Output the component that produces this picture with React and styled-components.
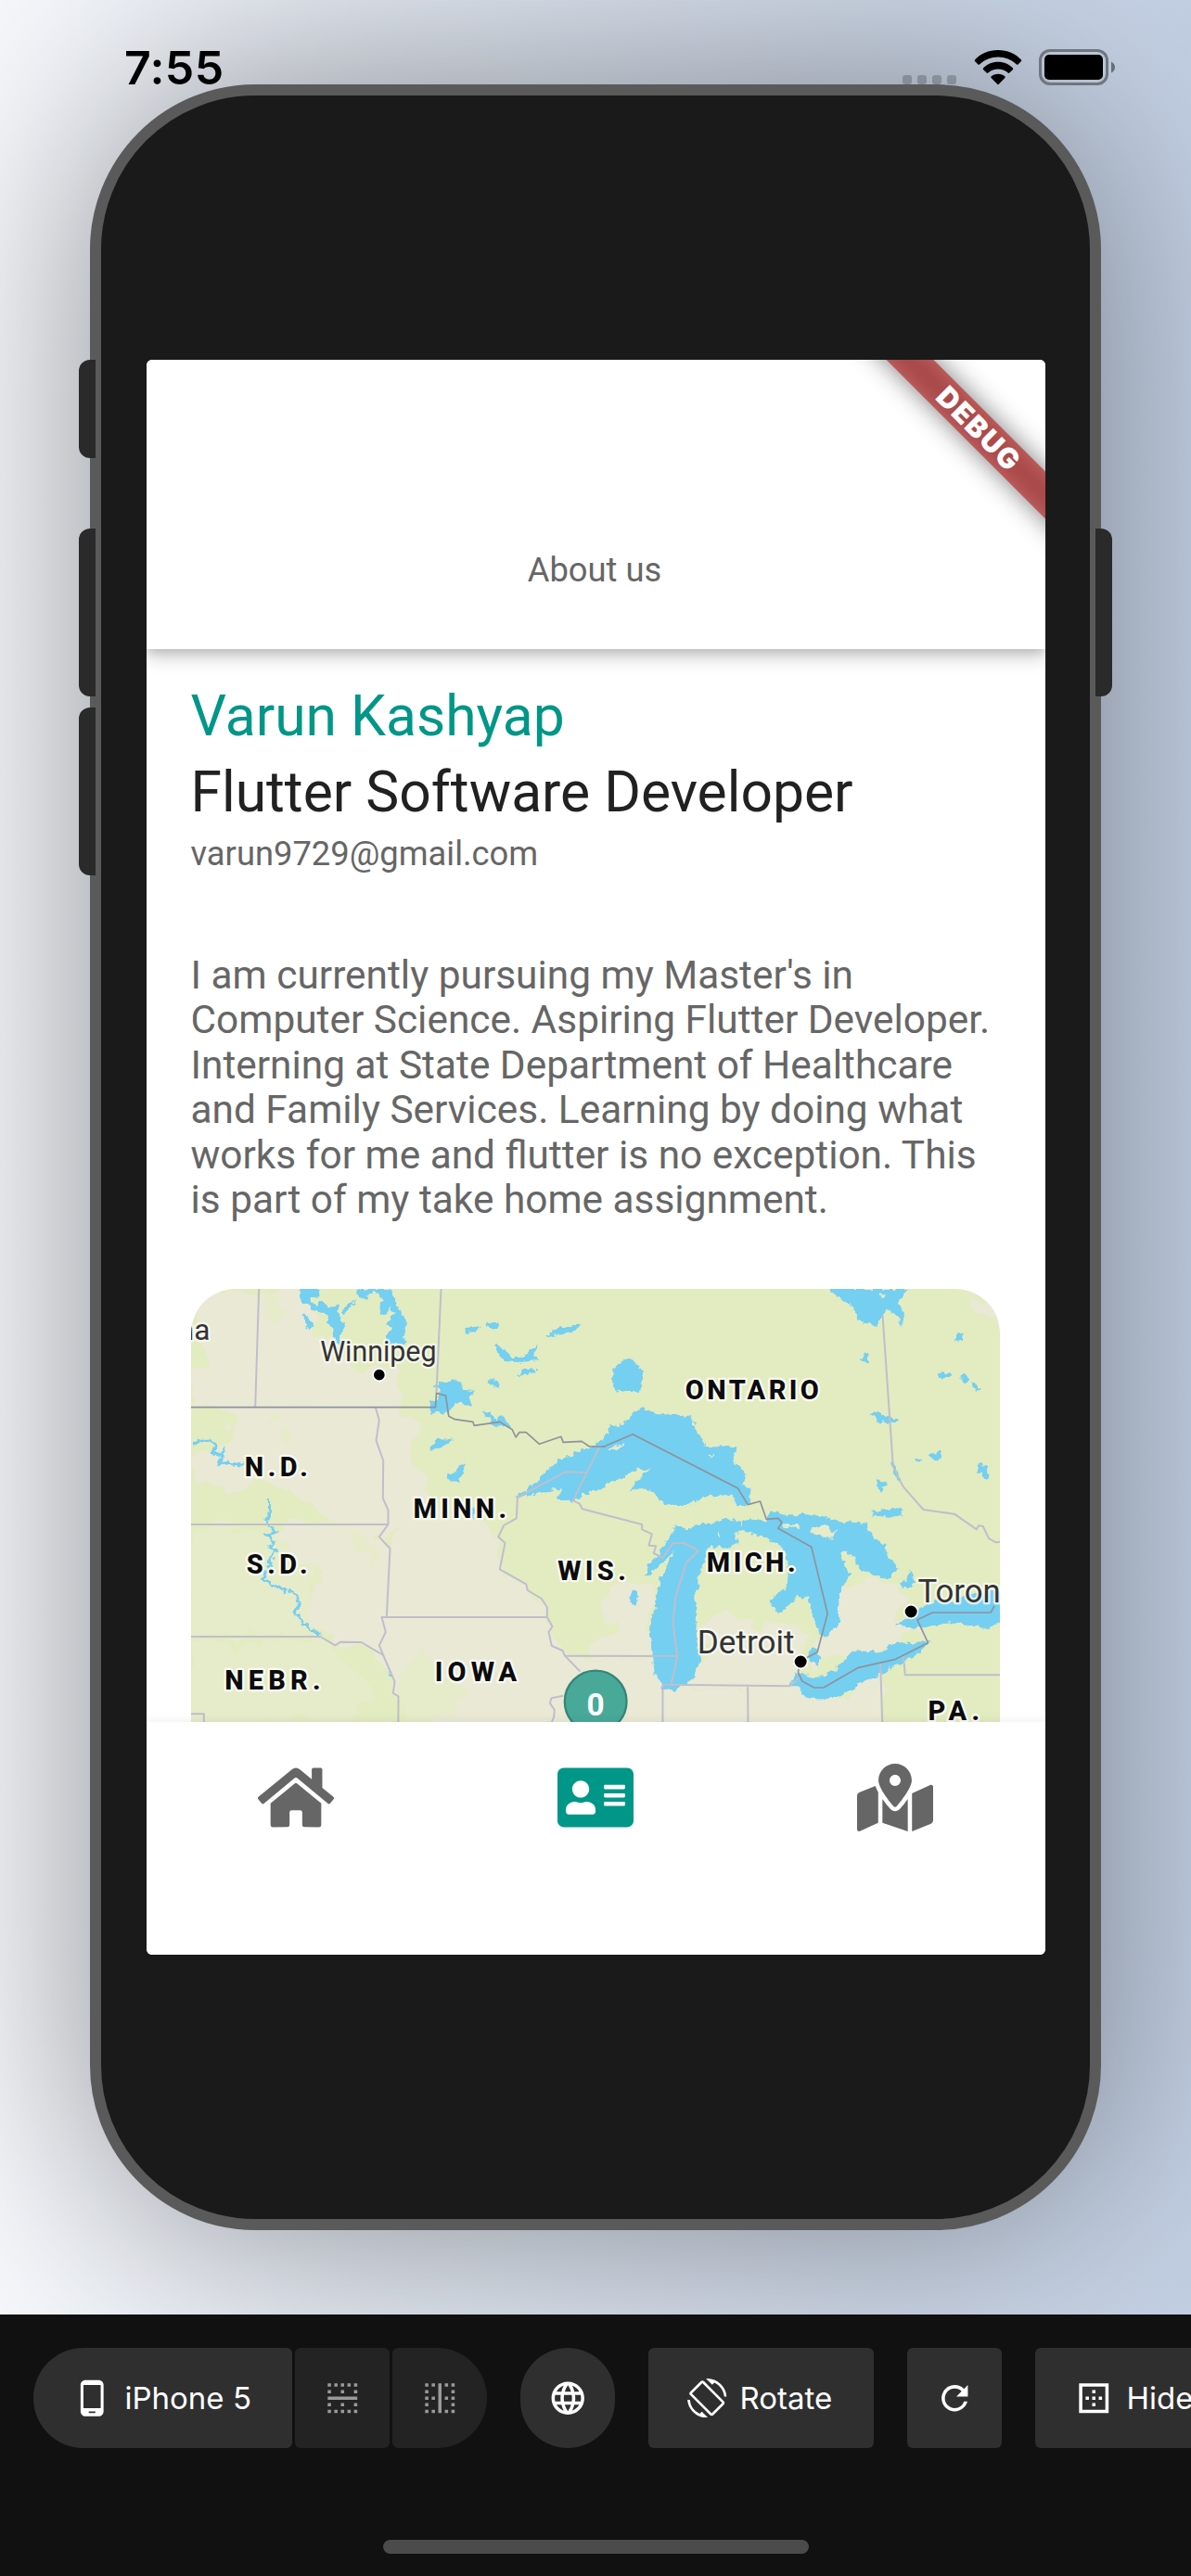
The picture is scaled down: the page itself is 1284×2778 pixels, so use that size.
import React from "react";
import styled, { createGlobalStyle, css } from "styled-components";
import { FaHome, FaAddressCard, FaMapMarkedAlt } from "react-icons/fa";
import {
  MdPhoneAndroid,
  MdBorderHorizontal,
  MdBorderVertical,
  MdLanguage,
  MdScreenRotation,
  MdRefresh,
  MdBorderOuter,
} from "react-icons/md";

const GlobalStyle = createGlobalStyle`
  *, *::before, *::after { box-sizing: border-box; }
  body { margin: 0; font-family: Roboto, sans-serif; }
  svg { display: block; flex: none; }
`;

const Page = styled.div`
  width: 1284px;
  height: 2778px;
  display: flex;
  flex-direction: column;
  overflow: hidden;
  background: #111;
`;

const Stage = styled.main`
  height: 2496px;
  overflow: hidden;
  background: linear-gradient(90deg, #f5f7fb, #c2cfe3);
`;

/* ---------- system status bar ---------- */

const StatusBar = styled.header`
  position: relative;
  z-index: 1;
  height: 91px;
  padding: 0 82px 0 134px;
  display: flex;
  justify-content: space-between;
  align-items: flex-end;
`;

const Clock = styled.time`
  font: 600 50px/60px Inter, sans-serif;
  letter-spacing: 0.4px;
  margin-bottom: -12px;
  color: #000;
`;

const StatusIcons = styled.div`
  display: flex;
  align-items: flex-end;
`;

const Signal = styled.div`
  display: flex;
  gap: 6px;
  margin-right: 19px;
`;

const SignalDot = styled.i`
  width: 10px;
  height: 10px;
  border-radius: 3px;
  background: rgba(60, 66, 76, 0.32);
`;

/* ---------- phone body ---------- */

const Phone = styled.section`
  position: relative;
  width: 1090px;
  height: 2314px;
  margin-left: 97px;
  display: flex;
  align-items: center;
  justify-content: center;
  border: 12px solid #5a5a5a;
  border-radius: 178px;
  background: #1a1a1a;
  box-shadow: 0 0 220px rgba(0, 0, 0, 0.4);
`;

const SideKey = styled.i`
  position: absolute;
  top: ${(p) => p.$top}px;
  width: 18px;
  height: ${(p) => p.$length}px;
  background: #2a2a2a;
  ${(p) =>
    p.$side === "left"
      ? css`
          left: -24px;
          border-radius: 12px 0 0 12px;
        `
      : css`
          right: -24px;
          border-radius: 0 12px 12px 0;
        `}
`;

const Screen = styled.div`
  position: relative;
  width: 969px;
  height: 1720px;
  display: flex;
  flex-direction: column;
  overflow: hidden;
  border-radius: 6px;
  background: #fff;
`;

const AppBar = styled.header`
  position: relative;
  z-index: 1;
  height: 312px;
  flex: none;
  padding-top: 206px;
  padding-right: 2px;
  background: #fff;
  box-shadow: 0 9px 18px rgba(0, 0, 0, 0.2), 0 3px 9px rgba(0, 0, 0, 0.12);
  text-align: center;
  font-size: 36.34px;
  line-height: 42px;
  color: #666;
`;

const Ribbon = styled.div`
  position: absolute;
  z-index: 2;
  left: 696.5px;
  top: 54.5px;
  width: 400px;
  height: 36px;
  padding-left: 4px;
  display: flex;
  align-items: center;
  justify-content: center;
  transform: rotate(45deg);
  font: 900 30.5px/36px Inter, sans-serif;
  letter-spacing: 1.6px;
  color: #fff;

  &::before,
  &::after {
    content: "";
    position: absolute;
    inset: 0;
    z-index: -1;
  }
  &::before {
    background: rgba(0, 0, 0, 0.5);
    filter: blur(14px);
  }
  &::after {
    background: rgba(183, 28, 28, 0.627);
  }
`;

const Profile = styled.article`
  flex: 1;
  min-height: 0;
  overflow: hidden;
  padding: 32px 49px 0 48px;
`;

const Name = styled.h1`
  margin: 0;
  font-size: 60.56px;
  font-weight: 400;
  line-height: 82px;
  color: #009688;
`;

const Role = styled.h2`
  margin: 0;
  font-size: 60.56px;
  font-weight: 400;
  line-height: 82px;
  color: #212121;
`;

const Email = styled.p`
  margin: 4px 0 0;
  font-size: 36.34px;
  line-height: 42px;
  color: #666;
`;

const Bio = styled.p`
  margin: 86px 0 0;
  font-size: 42.39px;
  line-height: 48.45px;
  color: #666;
`;

const MapCard = styled.div`
  margin-top: 71px;
  height: 605px;
  border-radius: 48px;
  overflow: hidden;
`;

const BottomNav = styled.nav`
  position: relative;
  z-index: 1;
  flex: none;
  height: 251px;
  padding-top: 45px;
  display: grid;
  grid-template-columns: repeat(3, 1fr);
  justify-items: center;
  align-items: start;
  background: #fff;
  box-shadow: 0 -2px 9px rgba(0, 0, 0, 0.06);
`;

const NavItem = styled.a`
  display: flex;
  font-size: 73px;
  color: ${(p) => (p.$active ? "#009688" : "#666")};
  svg {
    width: 82px;
    height: 73px;
  }
`;

/* ---------- preview toolbar ---------- */

const Toolbar = styled.footer`
  height: 282px;
  padding: 36px 0 0 36px;
  display: flex;
  flex-direction: column;
  justify-content: space-between;
  background: #111;
`;

const Tools = styled.div`
  display: flex;
  gap: 36px;
`;

const ToolGroup = styled.div`
  display: flex;
  gap: 3px;
`;

const radii = {
  start: "54px 6px 6px 54px",
  middle: "6px",
  end: "6px 54px 54px 6px",
  round: "54px",
};

const Tool = styled.button`
  flex: none;
  width: ${(p) => p.$width || 102}px;
  height: 108px;
  padding: 0 0 0 ${(p) => (p.$width ? 42 : 0)}px;
  display: flex;
  align-items: center;
  justify-content: ${(p) => (p.$width ? "flex-start" : "center")};
  gap: 14px;
  border: 0;
  border-radius: ${(p) => radii[p.$shape || "middle"]};
  background: ${(p) => (p.$dim ? "#232323" : "#2f2f2f")};
  color: ${(p) => (p.$dim ? "#9a9a9a" : "#fff")};
  font: 400 33px/40px Inter, sans-serif;
  svg {
    width: 42.5px;
    height: 42.5px;
  }
`;

const HomeIndicator = styled.i`
  width: 459px;
  height: 15px;
  margin: 0 0 24px 377px;
  border-radius: 8px;
  background: #4b4b4b;
`;

/* ---------- map drawing ---------- */

const MapSvg = styled.svg`
  width: 873px;
  height: 605px;
`;
const Beige = styled.path`
  fill: #e9e9d6;
`;
const Meadow = styled.path`
  fill: #e6ebc9;
`;
const Water = styled.path`
  fill: #75cff1;
`;
const River = styled.polyline`
  fill: none;
  stroke: #75cff1;
  stroke-width: 9;
`;
const StateLine = styled.polyline`
  fill: none;
  stroke: #bfbfcb;
  stroke-width: 6;
  stroke-linejoin: round;
`;
const NationLine = styled.polyline`
  fill: none;
  stroke: #8e939a;
  stroke-width: 5;
  stroke-linejoin: round;
`;
const RegionLabel = styled.text`
  font: 800 87px Roboto, sans-serif;
  fill: #0c0c0c;
  stroke: #fafaf2;
  stroke-width: 14;
  stroke-linejoin: round;
  paint-order: stroke;
`;
const CityLabel = styled.text`
  font: 400 ${(p) => p.$size || 94}px Roboto, sans-serif;
  fill: #333;
  stroke: rgba(250, 250, 245, 0.8);
  stroke-width: 14;
  stroke-linejoin: round;
  paint-order: stroke;
`;
const CityDot = styled.circle`
  fill: #000;
  stroke: #fff;
  stroke-width: 5;
`;
const Pin = styled.circle`
  fill: #48a999;
  stroke: #35857a;
  stroke-width: 7;
`;
const PinLabel = styled.text`
  font: 700 100px Roboto, sans-serif;
  fill: #fff;
  text-anchor: middle;
`;

const Region = ({ x, y, w, children }) => (
  <RegionLabel x={x} y={y} textLength={w}>
    {children}
  </RegionLabel>
);
const City = ({ x, y, w, size, children }) => (
  <CityLabel x={x} y={y} $size={size} textLength={w} lengthAdjust="spacingAndGlyphs">
    {children}
  </CityLabel>
);

const westBeige = [
  "M46 60H262L400 62L430 180L500 220L560 290L700 330L725 443H46V330L110 300L60 250Z",
  "M180 443H645L655 485L645 550L668 615V738L684 775V820H540L430 760L300 700H46V620L150 560Z",
  "M330 822H684L655 862L690 900L680 1122L668 1245L600 1200H530L512 1213L465 1185L430 1120L450 980L350 900Z",
  "M645 443H740L770 600L800 700L900 780L1040 850L1045 967L1130 1015L1198 1090V1122H680L690 900L684 820L668 738V615L645 550Z",
  "M663 1122H1200L1215 1210L1255 1245L1305 1300L1290 1460L1200 1900H717V1380L668 1245Z",
];
const eastBeige = [
  "M-95 1248H270L250 1340L497 1348L640 1343L700 1385L800 1375L930 1300V1460L930 1900H-120V1300Z",
  "M800 1000L900 1000L1000 1060L980 1150L1050 1160L1080 1200L960 1205L930 1235L840 1230L720 1300L735 1180L795 1140L790 1045Z",
  "M340 1180L400 1120L560 1160L640 1130L700 1190L660 1300L640 1343L330 1340L345 1250Z",
  "M1215 95L1250 85L1290 110L1300 125L1230 120Z",
  "M20 1040L100 1010L200 1040L180 1160L188 1245H0L60 1150Z",
];
const westMeadow = [
  "M275 60H330L320 110L340 160L290 180L270 120Z",
  "M300 510L340 490L350 530L320 545Z",
  "M560 840L610 850L650 940L640 985L590 900Z",
  "M720 1300L830 1240L850 1330L930 1350L900 1460H720Z",
  "M46 1200H460L600 1290L640 1380L560 1460H46Z",
  "M46 822H330L350 900L440 980L430 1100L460 1180H46Z",
];

const westWater = [
  "M395 60H460L462 85L430 88L445 112L470 98L492 115H520L525 160L542 172L532 200L535 298L512 215L504 185L488 175V140L440 130L425 110L400 100Z",
  "M582 60H690L710 100L725 135L748 175L735 185L740 240L678 235L680 205L695 182L680 175L700 145L690 120L672 145L652 140L655 110L665 95L640 66L612 92L590 88Z",
  "M405 145L430 150L447 180L430 190L415 178Z",
  "M537 135L545 112L578 98L560 120L545 140Z",
  "M928 188L985 180L965 198L935 202Z",
  "M1002 170L1040 172V186L1008 188Z",
  "M1192 210L1230 190L1305 175L1295 192L1245 205L1200 214Z",
  "M1025 240L1060 255L1080 280L1120 278L1165 238L1155 270L1172 290L1110 298L1060 290L1040 270Z",
  "M1105 342L1125 322L1160 318V328L1125 338Z",
  "M1003 358L1025 350L1045 368L1035 380L1020 368Z",
  "M835 370L900 350L925 365L920 382L962 392L945 410L955 435L900 430L880 462L820 460V425L845 415L855 392Z",
  "M990 455L1015 460L1030 480L1060 478L1082 508L1020 500L1010 480Z",
  "M820 570L850 545L895 542L880 562L820 582Z",
  "M873 670L900 655L920 628L937 632L920 660L915 684L880 680Z",
  "M955 770L965 765L962 800L952 795Z",
  "M680 1285L695 1310L688 1312Z",
];
const eastWater = [
  "M-250 733L-200 695L-115 615L-10 570L35 540L50 505L95 500L120 465L160 443L200 465L310 470L330 510L360 567L463 570L450 615L490 655L480 695L510 705L505 755L460 760L445 725L360 732L295 762L225 755L190 712L150 705L115 715L135 680L185 640L130 645L90 675L40 690L20 712L-10 715L-60 745L-120 740L-105 705L-150 712L-220 733Z",
  "M162 990L175 950L205 925L250 850L262 825L300 840L340 818H395L412 800L470 812L478 838L455 855L465 888L430 900L405 890L365 900L360 940L340 980L338 1030L320 1050L332 1090L330 1170L345 1250L320 1320L260 1358L220 1350L190 1290L188 1210L178 1160L198 1080L212 1000L240 950L262 905L230 940L200 960L185 985Z",
  "M478 815L500 806L560 808L570 775L620 790L720 790L800 812L880 818L885 845L940 890L950 920L988 962L950 1000L870 975L850 950L840 930L815 910L798 912L802 935L830 985L790 1045L795 1140L755 1180H730L705 1105L690 1060L660 1055L600 1110L572 1090L575 1065L625 1020L628 950L610 900L540 860L470 840Z",
  "M693 1230L712 1222L735 1250L725 1274L700 1265Z",
  "M632 1345L655 1300L720 1320L780 1290L840 1230L930 1235L960 1210L1088 1200L1040 1245L940 1300L870 1330L800 1375L735 1388L680 1380L660 1345Z",
  "M975 1150L1010 1125L1060 1090L1100 1070L1160 1075L1200 1050L1340 1035V1120L1270 1158L1150 1140L1050 1158Z",
  "M755 60H1015L980 105L1000 140L998 182L975 140L945 125L912 182L855 160L830 110Z",
  "M55 350L75 300L120 285L157 325L152 375L148 400L120 392L65 385Z",
  "M1168 208L1202 202L1190 225L1170 230Z",
  "M865 290L880 265L887 302Z",
  "M1110 335L1162 332L1140 345L1115 346Z",
  "M1187 345L1200 335L1214 355L1200 367Z",
  "M1220 358L1252 380L1240 394L1220 378Z",
  "M893 465L915 450L935 470L985 482L980 492L925 490Z",
  "M1035 608L1063 612L1048 626Z",
  "M1080 598L1120 582L1130 600L1105 618Z",
  "M1240 650L1245 628L1270 630L1272 675L1255 668Z",
  "M913 670L930 685L947 688L930 715L920 710Z",
  "M958 620L975 622L990 685L975 670Z",
  "M895 780L940 775L990 768L1003 790L950 800L910 792Z",
  "M990 1015L1010 1000L1020 968L1040 1010L1015 1032Z",
  "M115 1050L128 1030L142 1050L135 1085L120 1080Z",
];
const islands = [
  "M700 828L730 836L750 820L770 848L785 842L770 866L740 862L705 848Z",
  "M610 820L668 826L665 834L615 830Z",
  "M48 580L70 565L100 558L90 570L55 586Z",
  "M366 597L388 596V600L368 601Z",
  "M918 78L945 74L940 86L922 86Z",
  "M400 850L406 850V864H401Z",
];

function RegionMap() {
  return (
    <MapSvg viewBox="205.500 1390 873 605">
      <defs>
        <filter id="coast" x="-5%" y="-5%" width="110%" height="110%">
          <feTurbulence type="fractalNoise" baseFrequency="0.16" numOctaves="2" seed="4" result="n" />
          <feDisplacementMap in="SourceGraphic" in2="n" scale="8" xChannelSelector="R" yChannelSelector="G" />
        </filter>
        <filter id="fields" x="-5%" y="-5%" width="110%" height="110%">
          <feTurbulence type="fractalNoise" baseFrequency="0.03" numOctaves="3" seed="9" result="n" />
          <feDisplacementMap in="SourceGraphic" in2="n" scale="40" xChannelSelector="R" yChannelSelector="G" />
        </filter>
      </defs>
      <rect x="205" y="1390" width="875" height="605" fill="#e3ebc1" />
      <g filter="url(#fields)">
        <g transform="translate(190 1370) scale(0.33333)">
          {westBeige.map((d) => <Beige key={d} d={d} />)}
          {westMeadow.map((d) => <Meadow key={d} d={d} />)}
        </g>
        <g transform="translate(640 1370) scale(0.33333)">
          {eastBeige.map((d) => <Beige key={d} d={d} />)}
        </g>
      </g>
      <g filter="url(#coast)">
        <g transform="translate(190 1370) scale(0.33333)">
          {westWater.map((d) => <Water key={d} d={d} />)}
          <River points="55,562 75,550 112,550 128,570 115,590 150,598 135,625 165,620 190,632 218,622" />
          <River points="150,572 152,605" />
          <River points="300,738 300,780 292,808 318,848 288,855 318,885 300,892 318,910 298,940 305,955 280,995 310,1018 345,1030 350,1046" />
          <River points="362,1035 390,1055 395,1080 380,1102 400,1130 432,1160 462,1180" />
        </g>
        <g transform="translate(640 1370) scale(0.33333)">
          {eastWater.map((d) => <Water key={d} d={d} />)}
          {islands.map((d) => <Meadow key={d} d={d} />)}
        </g>
      </g>
      <g transform="translate(190 1370) scale(0.33333)">
        <StateLine points="266,60 254,443" />
        <StateLine points="855,60 840,398" />
        <StateLine points="643,443 655,485 645,550 668,615 667,738 684,775 684,822 655,862 690,900 679,1122" />
        <StateLine points="46,822 684,822" />
        <StateLine points="46,1185 465,1185 512,1213 530,1202 597,1203 668,1245" />
        <StateLine points="1200,1122 663,1122 676,1170 655,1213 668,1245 705,1330 700,1368 717,1378 716,1600" />
        <StateLine points="46,1435 88,1435 88,1600" />
        <StateLine points="1370,565 1282,745 1303,755 1312,772 1505,822 1505,838 1537,853 1527,890 1550,892 1543,915 1572,930 1605,882 1640,882 1688,907 1648,945 1613,1060 1605,1140 1619,1248 1600,1338" />
        <StateLine points="1325,654 1257,652 1102,735 1099,802 1058,825 1040,862 1062,882 1045,967 1130,1015 1135,1035 1180,1062 1198,1090 1198,1122 1215,1152 1203,1170 1213,1215 1248,1230 1255,1246 1305,1298" />
        <StateLine points="1255,1247 1619,1248" />
        <StateLine points="1250,1376 1212,1384 1207,1400 1222,1422 1220,1445 1205,1480" />
        <NationLine points="46,443 837,443 840,398 870,405 880,472 900,482 958,490 962,502 1045,490 1085,515 1097,540 1108,524 1130,524 1173,562 1243,538 1250,556 1310,553 1335,570 1385,570" />
        <City x={4} y={224} w={104}>na</City>
        <City x={464} y={293} w={376}>Winnipeg</City>
        <CityDot cx={655} cy={338} r={20} />
        <Region x={220} y={666} w={204}>N.D.</Region>
        <Region x={226} y={982} w={197}>S.D.</Region>
        <Region x={765} y={801} w={302}>MINN.</Region>
        <Region x={155} y={1357} w={310}>NEBR.</Region>
        <Region x={835} y={1329} w={265}>IOWA</Region>
        <Region x={1232} y={1002} w={221}>WIS.</Region>
      </g>
      <g transform="translate(640 1370) scale(0.33333)">
        <StateLine points="933,143 957,490 967,635 1000,700 1065,774 1165,788 1237,838 1243,826 1258,828 1277,868 1300,880 1330,876" />
        <StateLine points="222,1340 632,1345 665,1318" />
        <StateLine points="222,1340 222,1700" />
        <StateLine points="497,1348 500,1700" />
        <StateLine points="926,1270 940,1700" />
        <StateLine points="1000,1248 1006,1309 1340,1309" />
        <NationLine points="30,571 125,530 465,705 497,758 537,747 557,805 595,802 607,815 595,835 703,895 755,1110 722,1235 665,1265 660,1300 672,1328 712,1350 742,1350 855,1285 975,1258 1080,1205 1045,1130 1095,1107 1283,1107 1295,1085" />
        <Region x={295} y={418} w={432}>ONTARIO</Region>
        <Region x={364} y={975} w={287}>MICH.</Region>
        <Region x={1080} y={1454} w={167}>PA.</Region>
        <City x={334} y={1238} w={314} size={104}>Detroit</City>
        <City x={1047} y={1075} w={268} size={104}>Toron</City>
        <CityDot cx={668} cy={1266} r={22} />
        <CityDot cx={1025} cy={1104} r={22} />
        <Pin cx={5} cy={1395} r={100} />
        <PinLabel x={5} y={1440}>0</PinLabel>
      </g>
    </MapSvg>
  );
}

const WifiIcon = () => (
  <svg width="52" height="38" viewBox="0 0 52 38">
    <path d="M26 0C36 0 45 4 51 10.500Q51.500 11.200 51 12L47.500 15.500Q46.800 16.100 46 15.500C40.500 10.300 33.500 7.500 26 7.500S11.500 10.300 6 15.500Q5.200 16.100 4.500 15.500L1 12Q.5 11.200 1 10.500C7 4 16 0 26 0Z" />
    <path d="M26 12.800C32.500 12.800 38 15.300 42 19.500Q42.500 20.200 42 21L38.300 24.600Q37.500 25.200 36.700 24.600C33.800 22 30 20.500 26 20.500S18.200 22 15.300 24.600Q14.500 25.200 13.700 24.600L10 21Q9.500 20.200 10 19.500C14 15.300 19.500 12.800 26 12.800Z" />
    <path d="M26 25.700C29 25.700 31.500 26.700 33.500 28.500Q34 29.300 33.400 30L26.800 36.700Q26 37.400 25.200 36.700L18.600 30Q18 29.300 18.500 28.500C20.500 26.700 23 25.700 26 25.700Z" />
  </svg>
);

const BatteryIcon = () => (
  <svg width="82" height="39" viewBox="0 0 82 39">
    <rect x="1.500" y="1.500" width="72" height="36" rx="10.500" fill="none" stroke="#70767f" strokeWidth="3" />
    <rect x="6" y="6" width="63" height="27" rx="5" />
    <path d="M78 13.500Q82 15.500 82 19.500T78 25.500Z" fill="#66707a" />
  </svg>
);

const StatusGlyph = styled.span`
  display: flex;
  margin: 0 ${(p) => p.$after || 0}px ${(p) => p.$drop}px 0;
`;

export default function App() {
  return (
    <Page>
      <GlobalStyle />
      <Stage>
        <StatusBar>
          <Clock>7:55</Clock>
          <StatusIcons>
            <Signal>
              {[0, 1, 2, 3].map((n) => (
                <SignalDot key={n} />
              ))}
            </Signal>
            <StatusGlyph $drop={-1} $after={18}>
              <WifiIcon />
            </StatusGlyph>
            <StatusGlyph $drop={-1}>
              <BatteryIcon />
            </StatusGlyph>
          </StatusIcons>
        </StatusBar>
        <Phone>
          <SideKey $side="left" $top={285} $length={106} />
          <SideKey $side="left" $top={467} $length={181} />
          <SideKey $side="left" $top={660} $length={181} />
          <SideKey $side="right" $top={467} $length={181} />
          <Screen>
            <AppBar>About us</AppBar>
            <Profile>
              <Name>Varun Kashyap</Name>
              <Role>Flutter Software Developer</Role>
              <Email>varun9729@gmail.com</Email>
              <Bio>
                I am currently pursuing my Master's in Computer Science. Aspiring Flutter Developer.
                Interning at State Department of Healthcare and Family Services. Learning by doing what
                works for me and flutter is no exception. This is part of my take home assignment.
              </Bio>
              <MapCard>
                <RegionMap />
              </MapCard>
            </Profile>
            <BottomNav>
              <NavItem>
                <FaHome />
              </NavItem>
              <NavItem $active>
                <FaAddressCard />
              </NavItem>
              <NavItem>
                <FaMapMarkedAlt />
              </NavItem>
            </BottomNav>
            <Ribbon>DEBUG</Ribbon>
          </Screen>
        </Phone>
      </Stage>
      <Toolbar>
        <Tools>
          <ToolGroup>
            <Tool $width={279} $shape="start">
              <MdPhoneAndroid />
              iPhone 5
            </Tool>
            <Tool $dim>
              <MdBorderHorizontal />
            </Tool>
            <Tool $dim $shape="end">
              <MdBorderVertical />
            </Tool>
          </ToolGroup>
          <Tool $shape="round">
            <MdLanguage />
          </Tool>
          <Tool $width={243}>
            <MdScreenRotation />
            Rotate
          </Tool>
          <Tool>
            <MdRefresh />
          </Tool>
          <Tool $width={243}>
            <MdBorderOuter />
            Hide
          </Tool>
        </Tools>
        <HomeIndicator />
      </Toolbar>
    </Page>
  );
}
